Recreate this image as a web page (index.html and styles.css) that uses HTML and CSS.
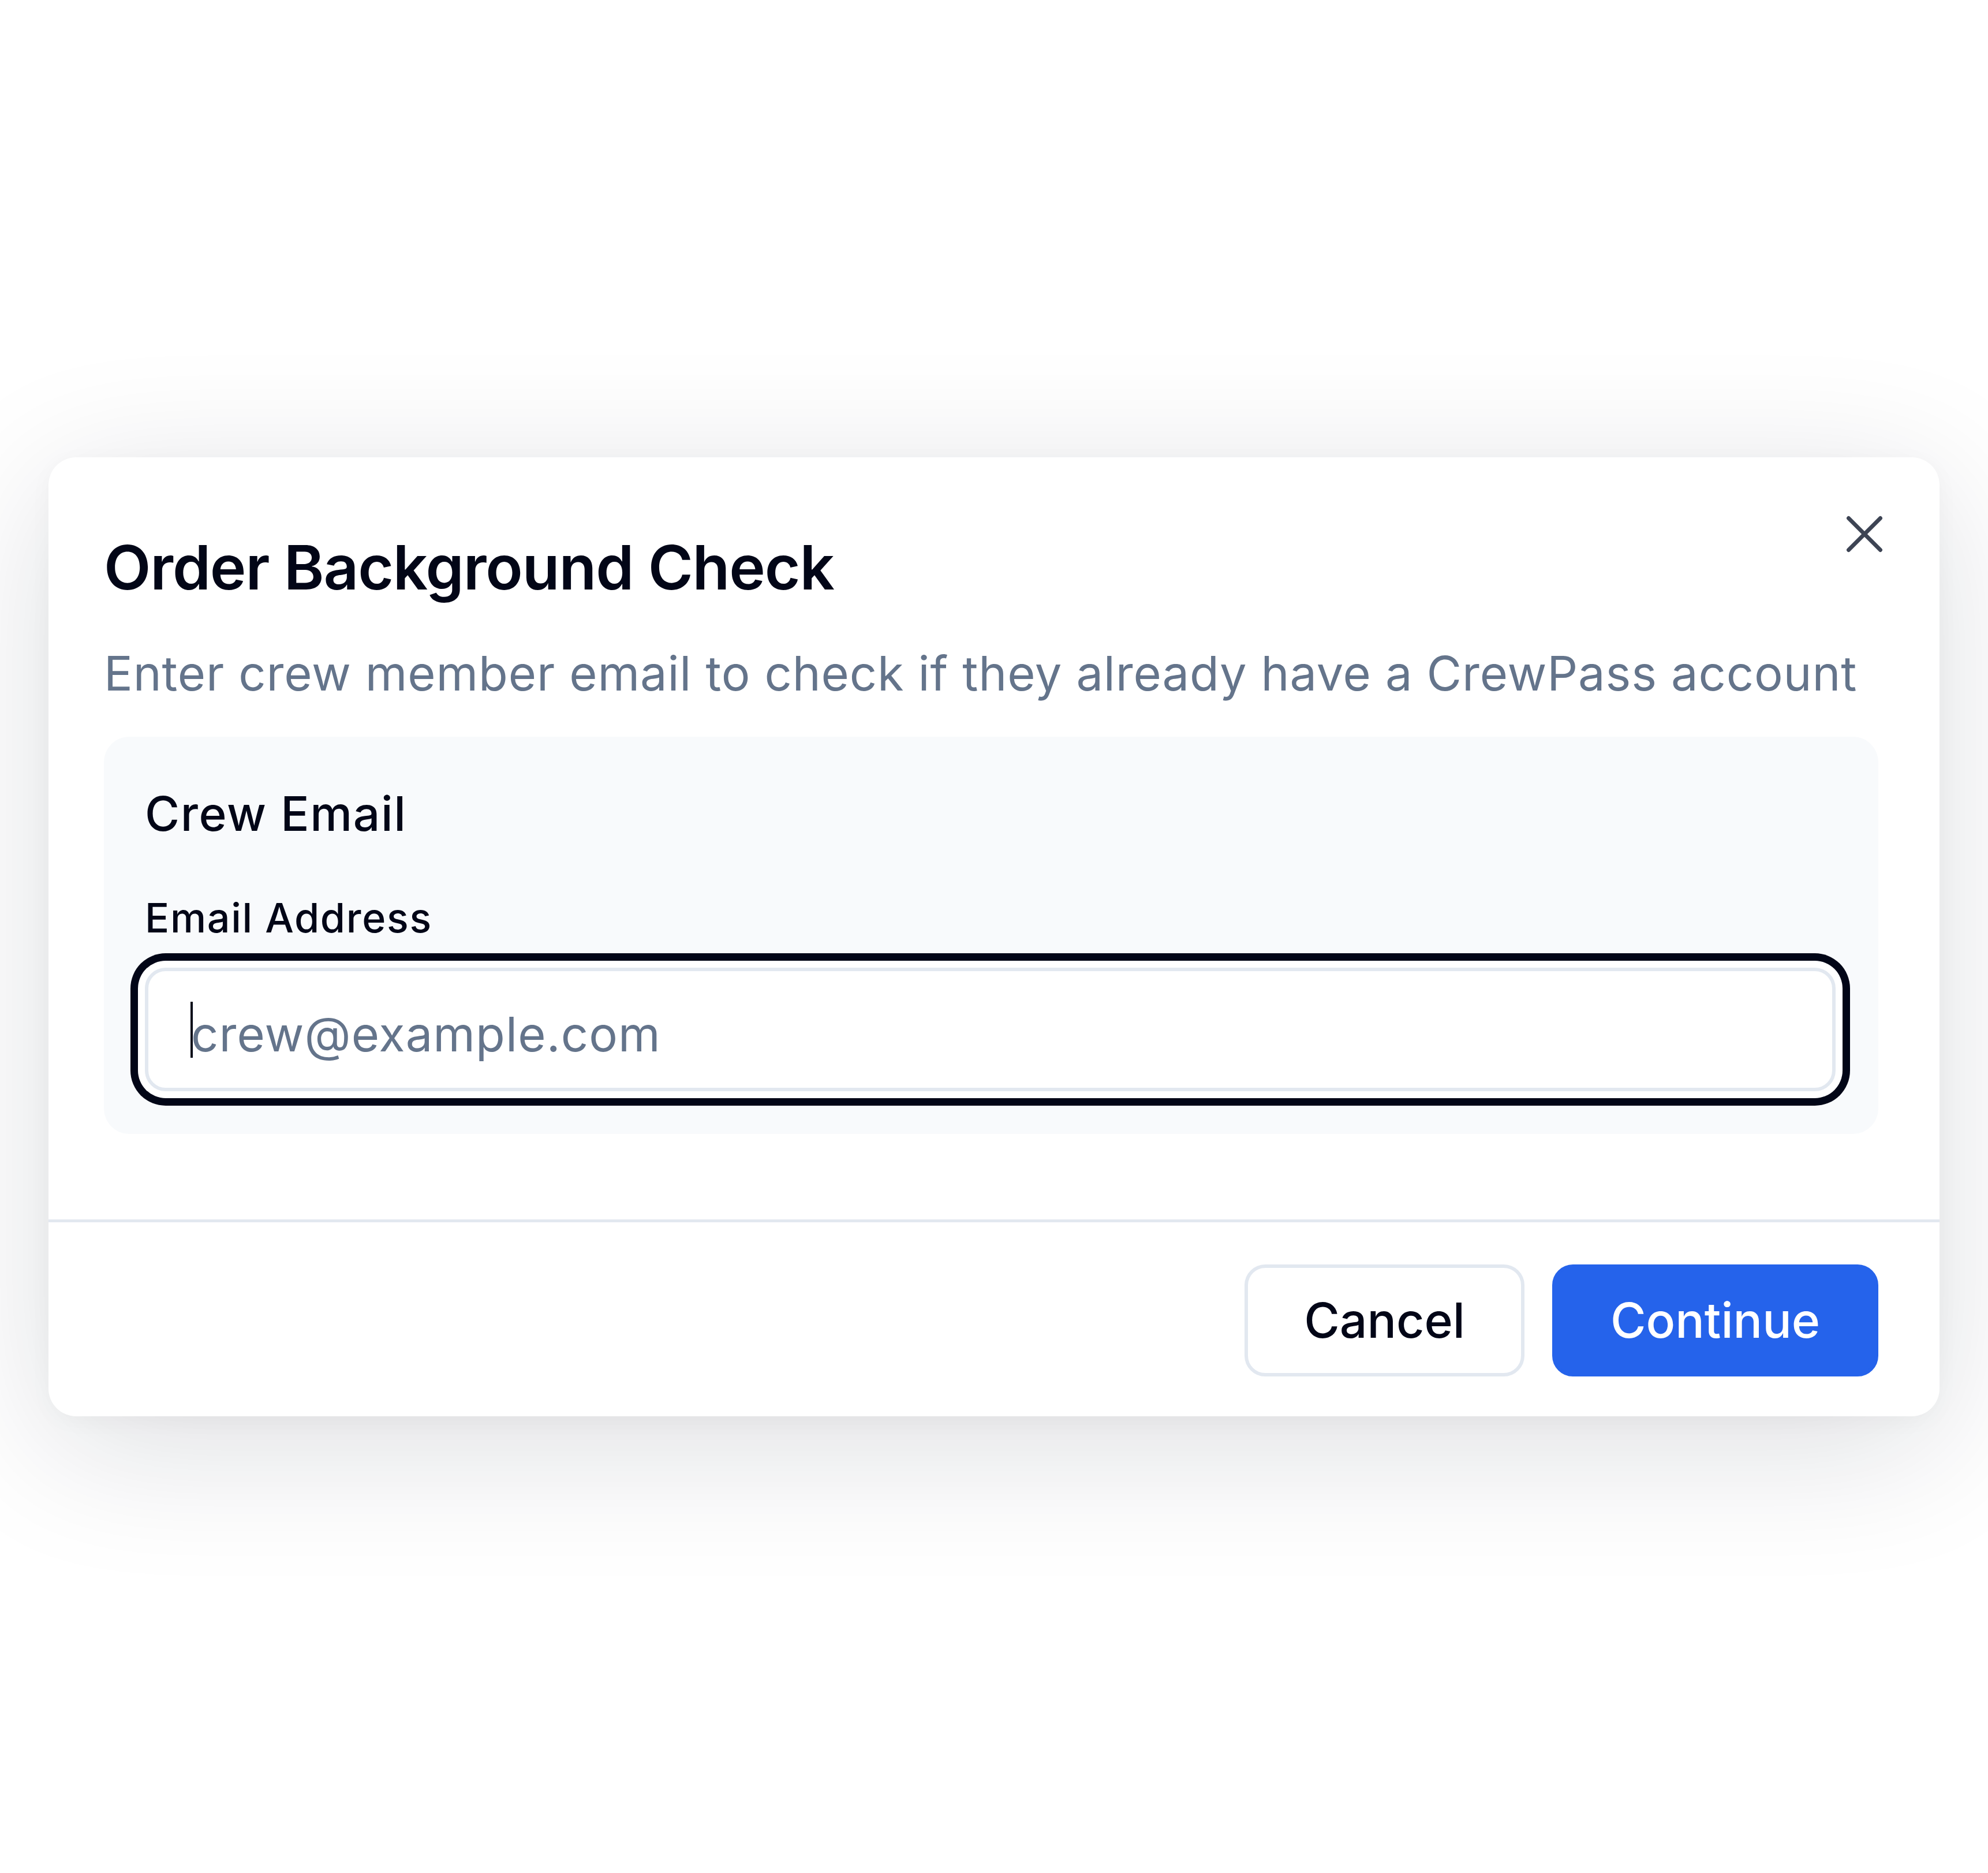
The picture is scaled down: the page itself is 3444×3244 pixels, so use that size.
FILE: index.html
```html
<!DOCTYPE html>
<html lang="en">
<head>
<meta charset="utf-8">
<title>Order Background Check</title>
<link rel="stylesheet" href="styles.css">
</head>
<body>
  <div class="dialog" role="dialog" aria-labelledby="dlg-title">
    <button class="close" type="button" aria-label="Close">
      <svg viewBox="0 0 24 24" width="110" height="110" fill="none" stroke="currentColor" stroke-width="1.5" stroke-linecap="round" stroke-linejoin="round"><path d="M18 6 6 18"/><path d="m6 6 12 12"/></svg>
    </button>
    <div class="dialog-body">
      <header class="header">
        <h2 class="title" id="dlg-title">Order Background Check</h2>
        <p class="desc">Enter crew member email to check if they already have a CrewPass account</p>
      </header>
      <section class="panel">
        <h3 class="panel-title">Crew Email</h3>
        <label class="label" for="email">Email Address</label>
        <div class="field">
          <input id="email" class="input" type="email" placeholder="crew@example.com">
          <span class="caret"></span>
        </div>
      </section>
    </div>
    <footer class="footer">
      <button class="btn btn-outline" type="button">Cancel</button>
      <button class="btn btn-primary" type="button">Continue</button>
    </footer>
  </div>
</body>
</html>
```

FILE: styles.css
```css
* { box-sizing: border-box; }

html, body {
  margin: 0;
  padding: 0;
  background: #ffffff;
}

body {
  height: 100vh;
  display: flex;
  align-items: center;
  justify-content: center;
  font-family: Inter, "Noto Sans", "Liberation Sans", sans-serif;
  color: #020617;
}

.dialog {
  position: relative;
  width: 3276px;
  background: #ffffff;
  border-radius: 48px;
  box-shadow: 0 50px 250px rgba(15, 23, 42, 0.14), 0 8px 40px rgba(15, 23, 42, 0.03);
}

.close {
  position: absolute;
  top: 78px;
  right: 75px;
  width: 110px;
  height: 110px;
  padding: 0;
  border: 0;
  background: transparent;
  color: #3d4454;
  display: flex;
}

.close svg { display: block; }

.dialog-body {
  padding: 138px 106px 148px 96px;
}

.header {
  display: flex;
  flex-direction: column;
}

.title {
  margin: 0;
  font-size: 106px;
  line-height: 106px;
  font-weight: 600;
  letter-spacing: -0.011em;
  color: #020617;
}

.desc {
  margin: 71px 0 0;
  font-size: 83px;
  line-height: 118px;
  font-weight: 400;
  letter-spacing: 0.01em;
  color: #64748b;
  white-space: nowrap;
}

.panel {
  margin-top: 51px;
  padding: 75px 74px 74px 71px;
  background: #f8fafc;
  border-radius: 44px;
}

.panel-title {
  margin: 0;
  font-size: 82px;
  line-height: 117px;
  font-weight: 500;
  letter-spacing: 0.02em;
  color: #020617;
}

.label {
  display: block;
  margin-top: 75px;
  font-size: 70px;
  line-height: 93px;
  font-weight: 500;
  letter-spacing: 0.024em;
  color: #020617;
}

.field {
  position: relative;
  margin-top: 40px;
}

.input {
  display: block;
  width: 100%;
  height: 214px;
  padding: 16px 71px 0 74px;
  border: 6px solid #e2e8f0;
  border-radius: 36px;
  background: #ffffff;
  font-family: Inter, "Noto Sans", "Liberation Sans", sans-serif;
  font-size: 83px;
  letter-spacing: 0.013em;
  color: #020617;
  outline: none;
  box-shadow: 0 0 0 12px #ffffff, 0 0 0 25px #020617;
}

.input::placeholder {
  color: #64748b;
  opacity: 1;
}

.caret {
  position: absolute;
  left: 79px;
  top: 59px;
  width: 4px;
  height: 97px;
  background: #020617;
}

.footer {
  display: flex;
  justify-content: flex-end;
  gap: 48px;
  padding: 73px 106px 69px 96px;
  border-top: 5px solid #e2e8f0;
}

.btn {
  height: 194px;
  border: 6px solid transparent;
  border-radius: 36px;
  font-family: Inter, "Noto Sans", "Liberation Sans", sans-serif;
  font-size: 84px;
  font-weight: 500;
  line-height: 1;
  display: inline-flex;
  align-items: center;
  justify-content: center;
}

.btn-outline {
  padding: 0 97px;
  background: #ffffff;
  border-color: #e2e8f0;
  color: #020617;
}

.btn-primary {
  padding: 0 95px;
  background: #2563eb;
  border-color: #2563eb;
  color: #ffffff;
}
```
